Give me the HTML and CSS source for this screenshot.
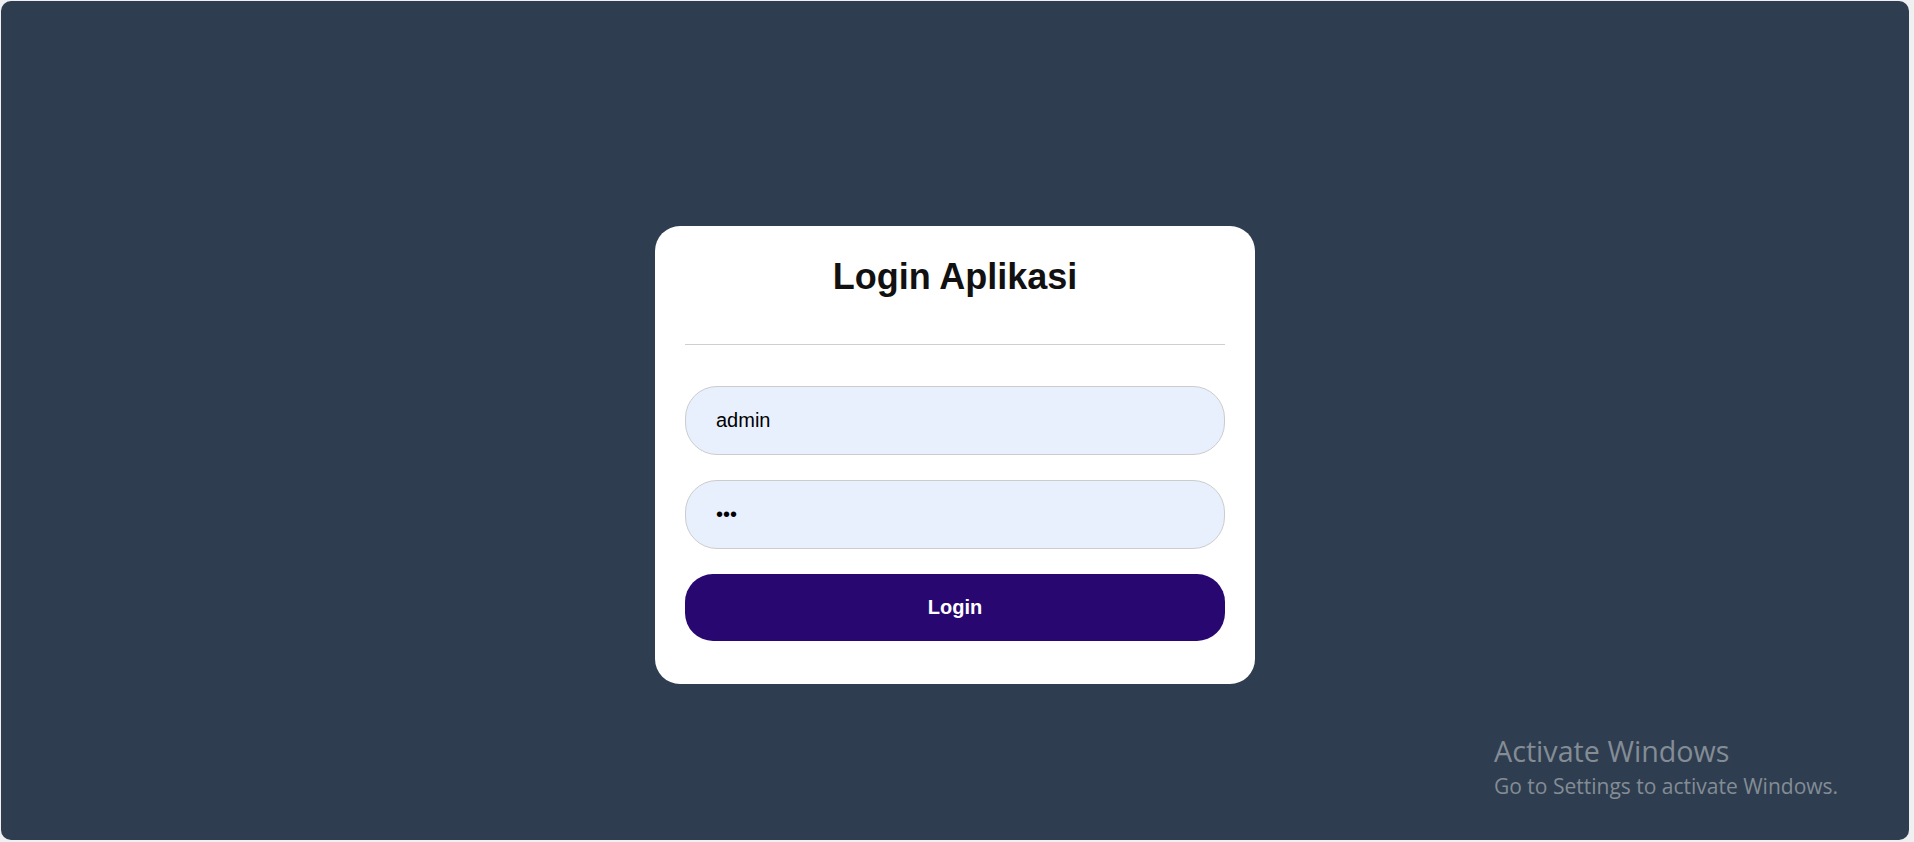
FILE: index.html
```html
<!DOCTYPE html>
<html lang="id">
<head>
<meta charset="utf-8">
<title>Login Aplikasi</title>
<link rel="stylesheet" href="styles.css">
</head>
<body>
<div class="screen">
  <div class="card">
    <h2 class="title">Login Aplikasi</h2>
    <div class="divider"></div>
    <form class="form" onsubmit="return false">
      <input class="field" type="text" value="admin">
      <input class="field" type="password" value="123">
      <button class="btn" type="submit">Login</button>
    </form>
  </div>
  <div class="watermark">
    <div class="wm-title">Activate Windows</div>
    <div class="wm-sub">Go to Settings to activate Windows.</div>
  </div>
</div>
</body>
</html>
```

FILE: styles.css
```css
html, body {
  margin: 0;
  padding: 0;
  background: #eef0f2;
}

.screen {
  position: relative;
  box-sizing: border-box;
  margin: 1px 5px 0 1px;
  height: 839px;
  border-radius: 10px;
  background: #2e3e50;
  display: flex;
  justify-content: center;
  align-items: flex-start;
  padding-top: 225px;
  overflow: hidden;
}

.card {
  box-sizing: border-box;
  width: 600px;
  padding: 31px 30px 43px;
  background: #ffffff;
  border-radius: 25px;
  display: flex;
  flex-direction: column;
}

.title {
  margin: 0;
  font-family: "Liberation Sans", Arial, sans-serif;
  font-weight: 700;
  font-size: 36px;
  line-height: 40px;
  color: #111111;
  text-align: center;
}

.divider {
  margin-top: 47px;
  height: 1px;
  background: #cfcfcf;
}

.form {
  margin: 41px 0 0;
  display: flex;
  flex-direction: column;
  gap: 25px;
}

.field {
  box-sizing: border-box;
  width: 100%;
  height: 69px;
  padding: 0 30px;
  border: 1px solid #cccccc;
  border-radius: 32px;
  background: #e8f0fe;
  font-family: "Liberation Sans", Arial, sans-serif;
  font-size: 20px;
  color: #000000;
  outline: none;
}

.btn {
  box-sizing: border-box;
  width: 100%;
  height: 67px;
  border: none;
  border-radius: 28px;
  background: #290771;
  color: #ffffff;
  font-family: "Liberation Sans", Arial, sans-serif;
  font-weight: 700;
  font-size: 20px;
  cursor: pointer;
}

.watermark {
  position: absolute;
  left: 1493px;
  top: 731px;
  font-family: "Open Sans", "Noto Sans", sans-serif;
  color: #848c95;
  white-space: nowrap;
}

.wm-title {
  font-size: 28.7px;
  line-height: 38px;
}

.wm-sub {
  font-size: 21px;
  line-height: 32px;
}
```
